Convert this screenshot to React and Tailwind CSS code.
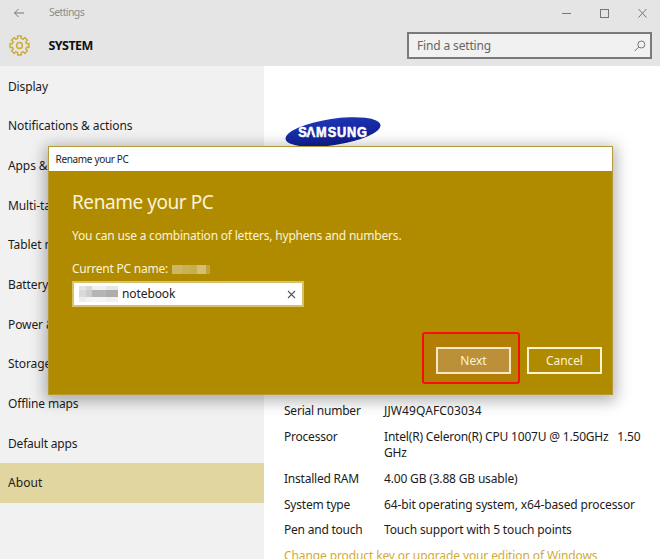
const NAV = [
  ['Display', 'tracking-[-0.15px]'],
  ['Notifications & actions', 'tracking-[-0.1px]'],
  ['Apps & features', 'tracking-[-0.1px]'],
  ['Multi-tasking', 'tracking-[-0.1px]'],
  ['Tablet mode', 'tracking-[-0.1px]'],
  ['Battery saver', 'tracking-[-0.1px]'],
  ['Power & sleep', 'tracking-[-0.1px]'],
  ['Storage', 'tracking-[-0.1px]'],
  ['Offline maps', 'tracking-[-0.15px]'],
  ['Default apps', 'tracking-[-0.2px]'],
  ['About', 'tracking-[0.1px]'],
];

const SPECS = [
  ['Serial number', 'tracking-[0.1px]', ['JJW49QAFC03034']],
  ['Processor', 'tracking-[-0.19px]', ['Intel(R) Celeron(R) CPU 1007U @ 1.50GHz   1.50', 'GHz']],
  ['Installed RAM', 'tracking-[-0.17px]', ['4.00 GB (3.88 GB usable)']],
  ['System type', 'tracking-[-0.13px]', ['64-bit operating system, x64-based processor']],
  ['Pen and touch', 'tracking-[-0.14px]', ['Touch support with 5 touch points']],
];

function gearPath() {
  const pts = [];
  const teeth = 8;
  for (let i = 0; i < teeth; i++) {
    const a = (i * 2 * Math.PI) / teeth - Math.PI / 2;
    [[-0.24, 7.3], [-0.2, 9.6], [0.2, 9.6], [0.24, 7.3]].forEach(([d, r]) => {
      pts.push(`${(10.5 + r * Math.cos(a + d)).toFixed(2)} ${(10.5 + r * Math.sin(a + d)).toFixed(2)}`);
    });
  }
  return `M${pts.join('L')}Z`;
}

function Header() {
  return (
    <header className="flex h-[66px] shrink-0 flex-col bg-[#e5e5e5]">
      <div className="flex h-[25px] items-center">
        <svg className="ml-[13px] shrink-0" width="12" height="10" viewBox="0 0 12 10" fill="none" stroke="#777" strokeWidth="1">
          <path d="M11 5H1.5M5.5 1L1.5 5L5.5 9" />
        </svg>
        <span className="ml-[24px] text-[10.5px] leading-none tracking-[-0.6px] text-[#8c8c8c]">Settings</span>
        <svg className="ml-auto mr-[12px] shrink-0" width="86" height="10" viewBox="0 0 86 10" fill="none" stroke="#777" strokeWidth="1">
          <path d="M0 5.5H9" />
          <rect x="38.5" y="1.5" width="8" height="8" />
          <path d="M76.5 1L84.5 9.5M84.5 1L76.5 9.5" />
        </svg>
      </div>
      <div className="flex h-[41px] items-start">
        <svg className="ml-[8.5px] mt-[10px] shrink-0" width="21" height="21" viewBox="0 0 21 21" fill="none" stroke="#cfad3a" strokeWidth="1.5" strokeLinejoin="round">
          <path d={gearPath()} />
          <circle cx="10.5" cy="10.5" r="2.9" />
        </svg>
        <span className="ml-[19px] mt-[13px] text-[12.5px] font-bold leading-[16px] tracking-[-0.55px] text-[#111]">SYSTEM</span>
        <div className="ml-auto mr-[8px] mt-[7px] flex h-[27px] w-[245px] items-center border-2 border-[#7a7a7a] bg-[#f1f1f1] pl-[8px] pr-[4px]">
          <span className="text-[12px] leading-none tracking-[-0.15px] text-[#666]">Find a setting</span>
          <svg className="ml-auto" width="12" height="12" viewBox="0 0 12 12" fill="none" stroke="#777" strokeWidth="1">
            <circle cx="7.3" cy="4.5" r="3.5" />
            <path d="M4.8 7L0.8 11" />
          </svg>
        </div>
      </div>
    </header>
  );
}

function Sidebar() {
  return (
    <nav className="w-[264px] shrink-0 bg-[#f1f1f1]">
      {NAV.map(([label, tracking]) => (
        <div
          key={label}
          className={`flex h-[39.7px] items-center pl-[8px] pt-[1.5px] text-[12px] text-[#1c1c1c] ${tracking} ${label === 'About' ? 'bg-[#e1d5a0]' : ''}`}
        >
          {label}
        </div>
      ))}
    </nav>
  );
}

function Logo() {
  return (
    <svg className="block" width="100" height="34" viewBox="0 0 100 34">
      <defs>
        <linearGradient id="oval" x1="0" y1="0" x2="0" y2="1">
          <stop offset="0" stopColor="#1c35b4" />
          <stop offset="1" stopColor="#101c90" />
        </linearGradient>
      </defs>
      <ellipse cx="49" cy="17" rx="48" ry="13.2" fill="url(#oval)" transform="rotate(-8.5 49 17)" />
      <text x="16.3 25.3 36.4 49.6 60.3 71.7 83" y="22" transform="scale(0.88 1)" fontFamily="'Liberation Sans', sans-serif" fontWeight="700" fontSize="14.5" fill="#fff" stroke="#fff" strokeWidth="0.6">SAMSUNG</text>
      <path d="M26.9 15.8L25 22.6H28.8Z" fill="#1729a3" />
    </svg>
  );
}

function About() {
  return (
    <main className="grow overflow-hidden bg-white pl-[20px] pt-[49px]">
      <Logo />
      <dl className="mt-[254px] flex flex-col gap-[9.2px] text-[12px] leading-[16.5px] text-[#1c1c1c]">
        {SPECS.map(([name, tracking, lines]) => (
          <div key={name} className="flex">
            <dt className="w-[100px] shrink-0 tracking-[-0.22px]">{name}</dt>
            <dd className={`whitespace-pre ${tracking}`}>
              {lines.map((line) => (
                <div key={line}>{line}</div>
              ))}
            </dd>
          </div>
        ))}
        <div className="whitespace-nowrap tracking-[-0.11px] text-[#d2ab35]">Change product key or upgrade your edition of Windows</div>
      </dl>
    </main>
  );
}

function Dialog() {
  return (
    <section className="absolute left-[48px] top-[146px] flex h-[249px] w-[565px] flex-col border border-[#b59a3a] bg-[#b08b00] text-[#fbf3d6] shadow-[0_3px_14px_3px_rgba(0,0,0,0.3)]">
      <div className="flex h-[24px] shrink-0 items-center bg-white pl-[6.5px] text-[10px] tracking-[-0.33px] text-[#222]">Rename your PC</div>
      <div className="flex grow flex-col px-[23px]">
        <h1 className="mt-[18px] text-[19px] leading-[26px] tracking-[-0.45px]">Rename your PC</h1>
        <p className="mt-[12px] text-[12px] leading-[18px] tracking-[-0.2px]">You can use a combination of letters, hyphens and numbers.</p>
        <div className="mt-[15px] flex items-center text-[12px] leading-[18px]">
          <span className="tracking-[-0.22px]">Current PC name:</span>
          <span className="ml-[4px] flex h-[9px] w-[38px]">
            <i className="w-[10px] bg-[#cdb665]" />
            <i className="w-[7px] bg-[#c9b255]" />
            <i className="w-[8px] bg-[#c7ae50]" />
            <i className="w-[9px] bg-[#d3bf75]" />
            <i className="w-[4px] bg-[#c0a33a]" />
          </span>
        </div>
        <div className="mt-[3px] flex h-[26px] w-[232px] items-center border-2 border-[#d9c16a] bg-white pl-[5px] pr-[6px] text-[12px] text-[#222]">
          <span className="grid h-[16px] w-[39px] grid-cols-[7px_6px_14px_12px] grid-rows-[4px_7px_5px]">
            <i className="bg-[#e4e4e4]" /><i className="bg-[#d8d8d8]" /><i className="bg-[#f1f1f1]" /><i className="bg-[#e6e6e6]" />
            <i className="bg-[#d9d9d9]" /><i className="bg-[#cccccc]" /><i className="bg-[#b5b5b5]" /><i className="bg-[#adadad]" />
            <i className="bg-[#ededed]" /><i className="bg-[#f2f2f2]" /><i className="bg-[#f5f5f5]" /><i className="bg-[#f0f0f0]" />
          </span>
          <span className="ml-[4px] tracking-[-0.1px]">notebook</span>
          <svg className="ml-auto" width="9" height="9" viewBox="0 0 9 9" fill="none" stroke="#555" strokeWidth="1.1">
            <path d="M1 1L8 8M8 1L1 8" />
          </svg>
        </div>
      </div>
      <div className="mb-[10px] mr-[10px] flex items-start justify-end gap-[7px] text-[12px]">
        <div className="rounded-[3px] border-[2.5px] border-[#f80d0a] bg-[#b27f04] pb-[8px] pl-[12px] pr-[7px] pt-[13px]">
          <button className="flex h-[27px] w-[75px] items-center justify-center border-2 border-[#f5e6c4] bg-[#bb9038] pt-px">Next</button>
        </div>
        <button className="mt-[15px] flex h-[27px] w-[75px] items-center justify-center border-2 border-[#faf2d5] pt-px tracking-[-0.1px]">Cancel</button>
      </div>
    </section>
  );
}

export default function App() {
  return (
    <div className="relative flex h-[559px] w-[660px] flex-col overflow-hidden font-['Noto_Sans',sans-serif]">
      <Header />
      <div className="flex min-h-0 grow">
        <Sidebar />
        <About />
      </div>
      <Dialog />
    </div>
  );
}
